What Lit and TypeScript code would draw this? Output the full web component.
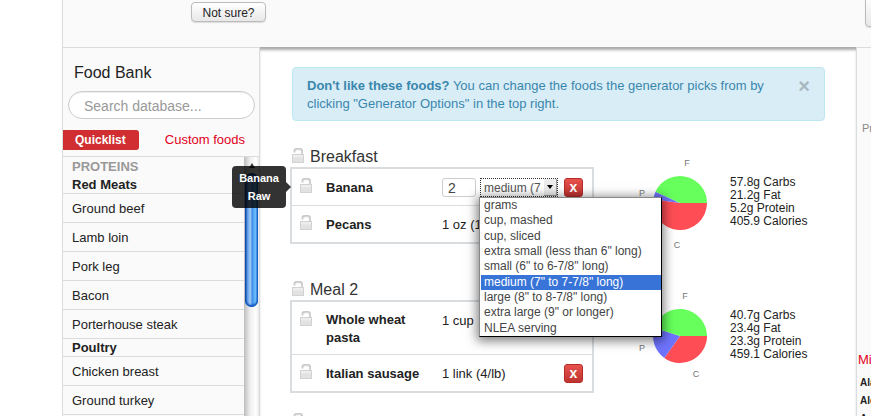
import { LitElement, html, css, svg, nothing } from "lit";
import { customElement, property } from "lit/decorators.js";

const lockIcon = html`<svg class="lock" viewBox="0 0 13 15" width="13" height="15" aria-hidden="true">
  <path d="M2.5 4.5V3Q2.5 1 4.5 1H8Q10 1 10 3V6" fill="none" stroke="#cacaca" stroke-width="2" />
  <path d="M3.5 4V3.5Q3.5 2 5 2H7.5Q9 2 9 3.5V6" fill="none" stroke="#e9e9e9" />
  <rect x="0.5" y="6.5" width="11" height="8" fill="#e2e2e2" stroke="#d2d2d2" />
  <path d="M1 7H11V9.5H1Z" fill="#ededed" />
</svg>`;

interface Food {
  name: string;
  amount: string;
  editing?: boolean;
}

interface Meal {
  title: string;
  foods: Food[];
  carbs: number;
  fat: number;
  protein: number;
  calories: number;
  labels: { f: number[]; p: number[]; c: number[] };
}

const UNITS = [
  "grams",
  "cup, mashed",
  "cup, sliced",
  'extra small (less than 6" long)',
  'small (6" to 6-7/8" long)',
  'medium (7" to 7-7/8" long)',
  'large (8" to 8-7/8" long)',
  'extra large (9" or longer)',
  "NLEA serving",
];

const MEALS: Meal[] = [
  {
    title: "Breakfast",
    foods: [
      { name: "Banana", amount: "2", editing: true },
      { name: "Pecans", amount: "1 oz (1" },
    ],
    carbs: 57.8, fat: 21.2, protein: 5.2, calories: 405.9,
    labels: { f: [57, 19], p: [12, 49], c: [47, 101] },
  },
  {
    title: "Meal 2",
    foods: [
      { name: "Whole wheat pasta", amount: "1 cup" },
      { name: "Italian sausage", amount: "1 link (4/lb)" },
    ],
    carbs: 40.7, fat: 23.4, protein: 23.3, calories: 459.1,
    labels: { f: [55, 19], p: [12, 71], c: [66, 97] },
  },
];

const GROUPS = [
  { title: "Red Meats", foods: ["Ground beef", "Lamb loin", "Pork leg", "Bacon", "Porterhouse steak"] },
  { title: "Poultry", foods: ["Chicken breast", "Ground turkey"] },
];

@customElement("food-bank")
export class FoodBank extends LitElement {
  static styles = css`
    :host {
      display: flex;
      flex-direction: column;
      box-sizing: border-box;
      border: 1px solid #d9dde0;
      border-bottom: 0;
      background: #fafafa;
      overflow: hidden;
    }
    h2 {
      margin: 14px 11px 7px;
      font-size: 16px;
      line-height: 22px;
      font-weight: normal;
      color: #222;
    }
    .search {
      box-sizing: border-box;
      height: 28px;
      margin: 0 4px 0 5px;
      padding: 2px 15px 0;
      border: 1px solid #ccc;
      border-radius: 14px;
      background: #fff;
      box-shadow: inset 0 1px 1px #eee;
      font: 14px "Liberation Sans", Arial, sans-serif;
      color: #333;
    }
    .search::placeholder {
      color: #999;
    }
    nav {
      display: flex;
      justify-content: space-between;
      margin: 11px 14px 6px 0;
      line-height: 20px;
    }
    nav a {
      color: #e2001a;
      text-decoration: none;
    }
    nav .active {
      padding: 0 13px 0 12px;
      border-radius: 0 3px 3px 0;
      background: #d02e30;
      color: #fff;
      font-size: 12px;
      font-weight: bold;
    }
    .scroller {
      flex: 1;
      min-height: 0;
      display: flex;
      border-top: 1px solid #d9dde0;
      overflow: hidden;
    }
    .list {
      flex: 1;
    }
    h3,
    h4 {
      margin: 0;
      padding-left: 9px;
      font-size: 13px;
      line-height: 19px;
      color: #222;
    }
    h3 {
      color: #999;
    }
    h4 {
      padding-top: 1px;
      line-height: 16px;
    }
    ul {
      margin: 0;
      padding: 0;
      list-style: none;
      border-bottom: 1px solid #d9dde0;
    }
    li {
      padding: 2px 0 0 9px;
      border-top: 1px solid #d9dde0;
      line-height: 26px;
    }
    .track {
      width: 15px;
      display: flex;
      flex-direction: column;
      align-items: center;
      background: linear-gradient(90deg, #bdbdbd, #eee 40%, #fff 80%, #e8e8e8);
    }
    .up {
      margin: 6px 0 5px;
    }
    .thumb {
      box-sizing: border-box;
      width: 13px;
      height: 134px;
      border-radius: 7px;
      background: linear-gradient(90deg, #0a3a9c, #5d9fe8 20%, #a9cdf5 40%, #3f8eea 55%, #6cc0ff 80%, #1b62c8);
      box-shadow: inset 0 -2px 2px #0b50b8, inset 0 2px 2px #0b50b8;
    }
  `;

  render() {
    return html`
      <h2>Food Bank</h2>
      <input class="search" type="search" placeholder="Search database..." aria-label="Search database" />
      <nav><a class="active" href="#quick">Quicklist</a><a href="#custom">Custom foods</a></nav>
      <div class="scroller">
        <div class="list">
          <h3>PROTEINS</h3>
          ${GROUPS.map(
            (g) => html`<h4>${g.title}</h4>
              <ul>${g.foods.map((f) => html`<li>${f}</li>`)}</ul>`
          )}
        </div>
        <div class="track" aria-hidden="true">
          <svg class="up" width="6" height="5" viewBox="0 0 6 5"><path d="M3 0L6 5H0Z" fill="#333" /></svg>
          <div class="thumb"></div>
        </div>
      </div>
    `;
  }
}

@customElement("macro-pie")
export class MacroPie extends LitElement {
  static styles = css`
    :host {
      display: block;
    }
    svg {
      display: block;
    }
    text {
      font: 9px "Liberation Sans", Arial, sans-serif;
      fill: #777;
      text-anchor: middle;
    }
  `;

  @property({ attribute: false }) meal!: Meal;

  render() {
    const { carbs, fat, protein, labels } = this.meal;
    const parts: [number, string][] = [
      [carbs * 4, "#ff4d55"],
      [protein * 4, "#6f74ff"],
      [fat * 9, "#66ff5c"],
    ];
    const total = parts.reduce((s, [v]) => s + v, 0);
    let angle = 0;
    const point = (a: number) => `${50 + 27 * Math.cos(a)} ${56 + 27 * Math.sin(a)}`;
    const slices = parts.map(([value, colour]) => {
      const start = angle;
      angle += (value / total) * Math.PI * 2;
      const large = angle - start > Math.PI ? 1 : 0;
      return svg`<path d="M50 56L${point(start)}A27 27 0 ${large} 1 ${point(angle)}Z" fill=${colour} />`;
    });
    return html`<svg width="100" height="112" viewBox="0 0 100 112" role="img" aria-label="Macronutrients">
      ${slices}
      <text x=${labels.f[0]} y=${labels.f[1]}>F</text>
      <text x=${labels.p[0]} y=${labels.p[1]}>P</text>
      <text x=${labels.c[0]} y=${labels.c[1]}>C</text>
    </svg>`;
  }
}

@customElement("unit-picker")
export class UnitPicker extends LitElement {
  static styles = css`
    :host {
      display: block;
      position: relative;
    }
    select {
      display: block;
      box-sizing: border-box;
      width: 78px;
      height: 19px;
      padding: 0 16px 0 3px;
      border: 1px dotted #333;
      border-radius: 0;
      appearance: none;
      background: #fff;
      color: #555;
      font: 12px "Liberation Sans", Arial, sans-serif;
      outline: 0;
    }
    .arrow {
      position: absolute;
      top: 1px;
      right: 1px;
      bottom: 1px;
      width: 13px;
      display: flex;
      align-items: center;
      justify-content: center;
      box-sizing: border-box;
      border-right: 1px solid #999;
      border-bottom: 1px solid #999;
      background: #ececec;
      pointer-events: none;
    }
    ul {
      position: absolute;
      z-index: 5;
      top: 100%;
      left: -1px;
      box-sizing: border-box;
      width: 183px;
      height: 140px;
      margin: 0;
      padding: 0 0 0 1px;
      display: flex;
      flex-direction: column;
      border: 1px solid #888;
      border-right-color: #000;
      border-bottom: 1px solid #000;
      background: #fff;
      box-shadow: 0 2px 10px 2px rgba(0, 0, 0, 0.5);
      list-style: none;
      color: #444;
      font-size: 12px;
      white-space: nowrap;
    }
    li {
      flex: 1;
      padding-left: 3px;
      line-height: 15px;
    }
    .selected {
      background: #3874d8;
      color: #fff;
    }
  `;

  render() {
    return html`
      <select aria-label="Unit">
        ${UNITS.map((u, i) => html`<option ?selected=${i === 5}>${u}</option>`)}
      </select>
      <span class="arrow"><svg width="6" height="4" viewBox="0 0 6 4"><path d="M0 0H6L3 4Z" /></svg></span>
      <ul role="listbox" aria-label="Units">
        ${UNITS.map(
          (u, i) => html`<li role="option" aria-selected=${i === 5 ? "true" : "false"} class=${i === 5 ? "selected" : ""}>${u}</li>`
        )}
      </ul>
    `;
  }
}

@customElement("meal-section")
export class MealSection extends LitElement {
  static styles = css`
    :host {
      display: grid;
      grid-template-columns: 304px 136px 1fr;
      min-height: 133px;
    }
    macro-pie {
      padding-left: 36px;
    }
    .macros {
      margin: 29px 0 0 0;
      padding: 0;
      list-style: none;
      font-size: 12px;
      line-height: 13px;
      white-space: nowrap;
    }
    h2 {
      display: flex;
      align-items: center;
      gap: 5px;
      margin: 0 0 1px 2px;
      font-size: 16px;
      line-height: 19px;
      font-weight: normal;
      color: #333;
    }
    .lock {
      display: block;
      margin-bottom: 3px;
    }
    table {
      width: 100%;
      table-layout: fixed;
      border: 2px solid #d9dde0;
      border-spacing: 0;
    }
    td,
    th {
      box-sizing: border-box;
      height: 36px;
      padding: 9px 8px 7px;
      line-height: 18px;
      text-align: left;
      color: #222;
    }
    tr + tr > * {
      height: 37px;
      border-top: 1px solid #d9dde0;
    }
    .state {
      position: relative;
      width: 26px;
      padding-right: 0;
      vertical-align: top;
    }
    .name {
      width: 116px;
    }
    .amount {
      width: 126px;
      padding: 10px 0 6px 8px;
      vertical-align: top;
    }
    .amount.editing {
      padding-top: 9px;
    }
    .action {
      padding: 9px 4px 7px;
      vertical-align: top;
    }
    .edit {
      display: flex;
      gap: 4px;
    }
    .qty {
      box-sizing: border-box;
      width: 34px;
      height: 19px;
      padding: 0 5px;
      border: 1px solid #ccc;
      border-radius: 3px;
      color: #444;
      font: 14px "Liberation Sans", Arial, sans-serif;
    }
    .remove {
      display: block;
      box-sizing: border-box;
      width: 19px;
      height: 19px;
      padding: 0;
      border: 1px solid #b52b27;
      border-radius: 3px;
      background: linear-gradient(#e8524d, #be3430);
      color: #fff;
      font: bold 14px/15px "Liberation Sans", Arial, sans-serif;
    }
    .tip {
      position: absolute;
      z-index: 6;
      top: -3px;
      right: calc(100% + 6px);
      box-sizing: border-box;
      width: 54px;
      height: 42px;
      padding: 3px 0;
      border-radius: 4px;
      background: rgba(0, 0, 0, 0.8);
      color: #fff;
      font-size: 11px;
      font-weight: bold;
      text-align: center;
    }
    .tip::after {
      content: "";
      position: absolute;
      left: 100%;
      top: 16px;
      border: 5px solid transparent;
      border-right: 0;
      border-left-color: rgba(0, 0, 0, 0.8);
    }
  `;

  @property({ attribute: false }) meal!: Meal;

  render() {
    const m = this.meal;
    return html`
      <div>
        <h2>${lockIcon}${m.title}</h2>
        <table>
          ${m.foods.map(
            (f) => html`<tr>
              <td class="state">
                ${lockIcon}
                ${f.editing ? html`<div class="tip" role="tooltip">Banana<br />Raw</div>` : nothing}
              </td>
              <th class="name" scope="row">${f.name}</th>
              <td class="amount ${f.editing ? "editing" : ""}">
                ${f.editing
                  ? html`<div class="edit">
                      <input class="qty" aria-label="Quantity" .value=${f.amount} />
                      <unit-picker></unit-picker>
                    </div>`
                  : f.amount}
              </td>
              <td class="action"><button class="remove" aria-label="Remove">x</button></td>
            </tr>`
          )}
        </table>
      </div>
      <macro-pie .meal=${m}></macro-pie>
      <ul class="macros">
        <li>${m.carbs}g Carbs</li>
        <li>${m.fat}g Fat</li>
        <li>${m.protein}g Protein</li>
        <li>${m.calories} Calories</li>
      </ul>
    `;
  }
}

@customElement("app-root")
export class AppRoot extends LitElement {
  static styles = css`
    :host {
      display: flex;
      flex-direction: column;
      box-sizing: border-box;
      height: 100vh;
      padding-left: 62px;
      overflow: hidden;
      background: #fff;
      color: #222;
      font: 13px/18px "Liberation Sans", Arial, sans-serif;
    }
    header {
      display: flex;
      justify-content: space-between;
      align-items: flex-start;
      box-sizing: border-box;
      height: 47px;
      flex: none;
      padding-left: 128px;
      border-left: 1px solid #d9dde0;
      background: #fafafa;
    }
    .btn {
      box-sizing: border-box;
      height: 20px;
      width: 75px;
      margin-top: 2px;
      padding: 2px 0 0;
      border: 1px solid #bbb;
      border-radius: 4px;
      background: linear-gradient(#fff, #e8e8e8);
      box-shadow: 0 1px 1px #ddd;
      color: #222;
      font: 12px "Liberation Sans", Arial, sans-serif;
    }
    .options {
      height: 32px;
      margin: -5px -69px 0 0;
    }
    .columns {
      flex: 1;
      min-height: 0;
      display: flex;
    }
    food-bank {
      width: 198px;
      flex: none;
    }
    main {
      flex: 1;
      min-width: 0;
      padding: 20px 31px 0 30px;
      box-shadow: inset 0 4px 3px -1px #aaa;
    }
    .alert {
      display: flex;
      gap: 20px;
      margin: 0 0 26px 2px;
      padding: 9px 14px 7px;
      border: 1px solid #bce8f1;
      border-radius: 4px;
      background: #d9edf7;
      color: #3a87ad;
    }
    .alert p {
      flex: 1;
      margin: 0;
    }
    .close {
      align-self: flex-start;
      padding: 0;
      border: 0;
      background: none;
      color: #a9b9c1;
      font: bold 20px/18px "Liberation Sans", Arial, sans-serif;
    }
    .next {
      margin: 0 2px;
    }
    aside {
      box-sizing: border-box;
      flex: none;
      width: 15px;
      overflow: hidden;
      white-space: nowrap;
      border: 1px solid #d9dde0;
      border-width: 1px 0 0 1px;
      background: #fafafa;
    }
    aside h3 {
      margin: 214px 0 5px 1px;
      font-size: 13px;
      font-weight: normal;
      color: #e2001a;
    }
    aside p {
      margin: 0 3px;
      font-size: 10px;
      font-weight: bold;
    }
    aside .chart-label {
      margin: 71px 5px 0;
      font-size: 11px;
      font-weight: normal;
      color: #888;
    }
  `;

  render() {
    return html`
      <header>
        <button class="btn">Not sure?</button>
        <button class="btn options" aria-label="Generator Options"></button>
      </header>
      <div class="columns">
        <food-bank></food-bank>
        <main>
          <div class="alert" role="alert">
            <p>
              <b>Don't like these foods?</b> You can change the foods the generator picks from by clicking
              "Generator Options" in the top right.
            </p>
            <button class="close" aria-label="Close">×</button>
          </div>
          ${MEALS.map((m) => html`<meal-section .meal=${m}></meal-section>`)}
          <div class="next">${lockIcon}</div>
        </main>
        <aside>
          <p class="chart-label">Pr</p>
          <h3>Mi</h3>
          <p>Ala</p>
          <p>Ale</p>
          <p>Ar</p>
        </aside>
      </div>
    `;
  }
}
